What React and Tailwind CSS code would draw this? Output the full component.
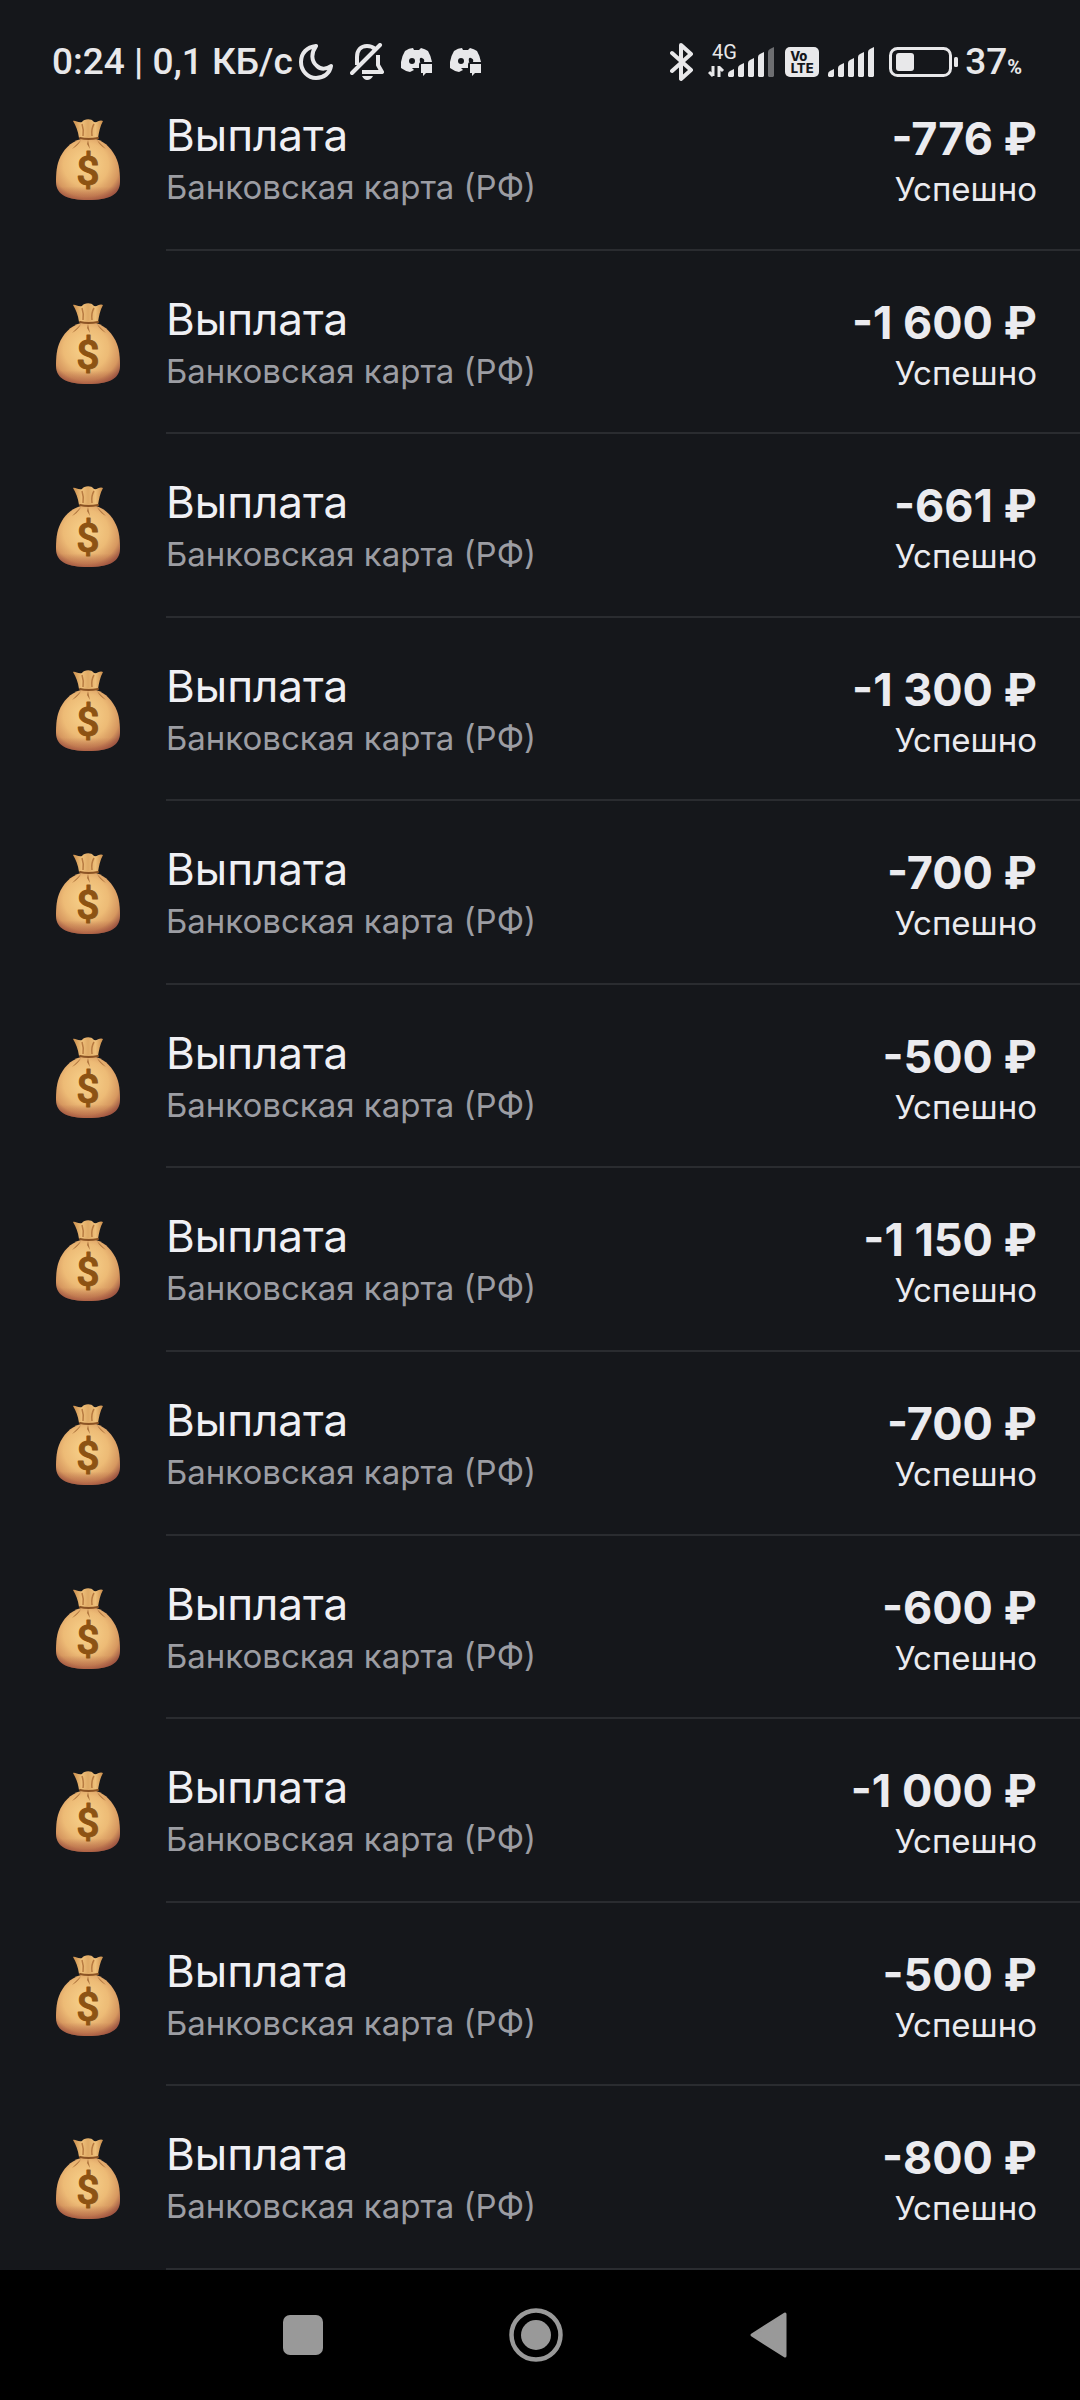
import React, { useId } from "react";

const payouts = [
  { id: 1, amount: "-776 ₽" },
  { id: 2, amount: "-1 600 ₽" },
  { id: 3, amount: "-661 ₽" },
  { id: 4, amount: "-1 300 ₽" },
  { id: 5, amount: "-700 ₽" },
  { id: 6, amount: "-500 ₽" },
  { id: 7, amount: "-1 150 ₽" },
  { id: 8, amount: "-700 ₽" },
  { id: 9, amount: "-600 ₽" },
  { id: 10, amount: "-1 000 ₽" },
  { id: 11, amount: "-500 ₽" },
  { id: 12, amount: "-800 ₽" },
];

const MoneyBag = () => {
  const id = useId();
  const body = `${id}-body`;
  const neck = `${id}-neck`;
  const shade = `${id}-shade`;

  return (
    <svg width="64" height="82" viewBox="0 0 64 82" aria-hidden="true">
      <defs>
        <radialGradient id={body} cx="0.47" cy="0.42" r="0.64">
          <stop offset="0" stopColor="#f8d38c" />
          <stop offset="0.55" stopColor="#edbb76" />
          <stop offset="0.82" stopColor="#d6975f" />
          <stop offset="1" stopColor="#a05a45" />
        </radialGradient>
        <linearGradient id={shade} x1="0" y1="0" x2="0" y2="1">
          <stop offset="0.78" stopColor="#a2503c" stopOpacity="0" />
          <stop offset="1" stopColor="#a2503c" stopOpacity="0.6" />
        </linearGradient>
        <linearGradient id={neck} x1="0" y1="0" x2="1" y2="0">
          <stop offset="0" stopColor="#c98c4b" />
          <stop offset="0.3" stopColor="#efc07a" />
          <stop offset="0.5" stopColor="#dfaa66" />
          <stop offset="0.75" stopColor="#efc07a" />
          <stop offset="1" stopColor="#c98c4b" />
        </linearGradient>
      </defs>
      <path
        d="M25 20C14 23 7 31 3 41C0 49 0 58 0 63C0 76 12 81 32 81C52 81 64 76 64 63C64 58 64 49 61 41C57 31 50 23 40 20Z"
        fill={`url(#${body})`}
      />
      <path
        d="M25 20C14 23 7 31 3 41C0 49 0 58 0 63C0 76 12 81 32 81C52 81 64 76 64 63C64 58 64 49 61 41C57 31 50 23 40 20Z"
        fill={`url(#${shade})`}
      />
      <path
        d="M23 19C22 12 20 7 17 2C19 1 22 4 26 3C28 0 35 -1 38 3C41 4 44 0 47 2C44 7 43 13 42 19Z"
        fill={`url(#${neck})`}
      />
      <path d="M26 5Q28 11 27 17M38 5Q35 10 36 17" stroke="#b87b42" strokeWidth="1.5" fill="none" />
      <path d="M24 19Q32 21 42 19" stroke="#8b5324" strokeWidth="2" fill="none" strokeLinecap="round" />
      <path d="M25 21Q22 27 16 30Q21 25 25 21M32 21L34 30L31 25ZM41 21Q44 27 50 30Q45 25 41 21" fill="#b0763f" />
      <text
        x="32"
        y="66"
        textAnchor="middle"
        fill="#8d5313"
        stroke="#8d5313"
        strokeWidth="1"
        strokeLinejoin="round"
        className="font-['Roboto',sans-serif] text-[41px] font-medium"
      >
        $
      </text>
    </svg>
  );
};

const MoonIcon = () => (
  <svg width="34" height="36" viewBox="0 0 34 36" fill="none" aria-hidden="true">
    <path
      d="M17 2C8 3 2 9 2 18C2 27 9 34 17 34C25 34 31 29 32 22C28 25 22 26 18 22C12 17 12 9 17 2Z"
      stroke="#e8e8ea"
      strokeWidth="4"
      strokeLinejoin="round"
    />
  </svg>
);

const BellOffIcon = () => (
  <svg width="34" height="38" viewBox="0 0 34 38" fill="none" aria-hidden="true">
    <path
      d="M7 22V14C7 7 11 3 17 3C20 3 23 4 25 6M28 12V22L32 29H12"
      stroke="#e8e8ea"
      strokeWidth="4"
      strokeLinejoin="round"
    />
    <path d="M2 30L30 2" stroke="#e8e8ea" strokeWidth="4" strokeLinecap="round" />
    <path d="M12 33H23Q21 37 17 37Q14 37 12 33Z" fill="#e8e8ea" />
  </svg>
);

const DiscordIcon = () => (
  <svg width="32" height="28" viewBox="0 0 32 28" aria-hidden="true">
    <path
      d="M4 3Q8 0 12 0L13 2H18L20 0Q24 1 27 3Q30 8 31 14H20Q18 14 18 17V20H11L13 22L9 24Q4 23 0 20Q-1 11 4 3Z"
      fill="#e8e8ea"
    />
    <circle cx="11" cy="13" r="3" fill="#15171b" />
    <path d="M19 14Q18 9 21 10Q24 11 23 14Z" fill="#15171b" />
    <path d="M20 16H31V25H25L22 28V25H20Z" fill="#e8e8ea" />
  </svg>
);

const BluetoothIcon = () => (
  <svg width="24" height="40" viewBox="0 0 24 40" fill="none" aria-hidden="true">
    <path
      d="M2 11L21 28L11 37V3L21 12L2 29"
      stroke="#e8e8ea"
      strokeWidth="4"
      strokeLinejoin="round"
      strokeLinecap="round"
    />
  </svg>
);

const bars = [
  "M0 27Q0 25 2 24L6 22V29L5 30H1L0 29Z",
  "M10 21Q10 19 12 18L16 16V29L15 30H11L10 29Z",
  "M20 16Q20 14 22 13L26 11V29L25 30H21L20 29Z",
  "M30 10Q30 8 32 7L36 5V29L35 30H31L30 29Z",
  "M40 5Q40 3 42 2L46 0V29L45 30H41L40 29Z",
];

const SignalBars = ({ level }) => (
  <>
    {bars.map((d, i) => (
      <path key={d} d={d} fill={i < level ? "#e8e8ea" : "#6d6e71"} />
    ))}
  </>
);

const MobileSignal = () => (
  <svg width="68" height="44" viewBox="0 0 68 44" aria-hidden="true">
    <text x="4" y="19" fill="#e8e8ea" className="font-['Roboto',sans-serif] text-[20px]">
      4G
    </text>
    <path d="M5 26V36M5 36L1 32M11 37V26M11 27L15 31" stroke="#e8e8ea" strokeWidth="3" fill="none" />
    <g transform="translate(20 7)">
      <SignalBars level={4} />
    </g>
  </svg>
);

const Battery = () => (
  <svg width="70" height="30" viewBox="0 0 70 30" fill="none" aria-hidden="true">
    <rect x="1.5" y="1.5" width="60" height="27" rx="7" stroke="#e8e8ea" strokeWidth="3" />
    <rect x="7" y="6" width="18" height="18" rx="3" fill="#e8e8ea" />
    <rect x="65" y="10" width="4" height="10" rx="1.5" fill="#e8e8ea" />
  </svg>
);

const StatusBar = () => {
  return (
    <header className="relative z-10 flex h-[84px] items-center justify-between pt-[40px] pl-[52px] pr-[58px] font-['Roboto',sans-serif] text-[#e8e8ea]">
      <div className="flex items-center">
        <span className="text-[37px] leading-[44px] font-medium whitespace-nowrap">0:24 | 0,1 КБ/с</span>
        <div className="ml-[6px] flex items-center gap-[17px]">
          <MoonIcon />
          <BellOffIcon />
          <DiscordIcon />
          <DiscordIcon />
        </div>
      </div>
      <div className="flex items-center">
        <BluetoothIcon />
        <div className="ml-[14px] flex items-center gap-[9px]">
          <MobileSignal />
          <div className="flex h-[30px] w-[34px] flex-col items-center justify-center rounded-[5px] bg-[#e8e8ea] font-['Inter',sans-serif] text-[13px] leading-[12px] font-extrabold text-[#15171b]">
            <span className="self-start pl-[5px]">Vo</span>
            <span>LTE</span>
          </div>
          <svg width="48" height="30" viewBox="0 0 48 30" aria-hidden="true">
            <SignalBars level={5} />
          </svg>
        </div>
        <div className="ml-[13px] flex items-center gap-[6px]">
          <Battery />
          <p className="text-[37px] leading-[44px] font-medium whitespace-nowrap">
            37<span className="text-[20px] leading-none font-bold">%</span>
          </p>
        </div>
      </div>
    </header>
  );
};

const PayoutRow = ({ amount }) => {
  return (
    <li className="flex flex-1 pl-[56px]">
      <div className="pt-[52px]">
        <MoneyBag />
      </div>
      <div className="ml-[46px] flex flex-1 justify-between border-b-2 border-[#2a2c30] pr-[43px]">
        <div className="pt-[42px]">
          <p className="text-[44px] leading-[52px] text-[#f0f0f4]">Выплата</p>
          <p className="text-[33px] leading-[52px] text-[#9c9da3]">Банковская карта (РФ)</p>
        </div>
        <div className="pt-[46px] text-right text-[#ebebef]">
          <p className="text-[45px] leading-[52px] font-bold">{amount}</p>
          <p className="text-[33px] leading-[48px]">Успешно</p>
        </div>
      </div>
    </li>
  );
};

const NavigationBar = () => {
  return (
    <nav className="grid h-[130px] grid-cols-3 bg-black pl-[186px] pr-[195px]">
      <button type="button" aria-label="Недавние" className="flex items-center justify-center">
        <span className="size-10 rounded-[7px] bg-[#999999]" />
      </button>
      <button type="button" aria-label="Домой" className="flex items-center justify-center">
        <svg width="54" height="54" viewBox="0 0 54 54">
          <circle cx="27" cy="27" r="24.5" fill="none" stroke="#999999" strokeWidth="4.5" />
          <circle cx="27" cy="27" r="15" fill="#999999" />
        </svg>
      </button>
      <button type="button" aria-label="Назад" className="flex items-center justify-center">
        <svg width="38" height="46" viewBox="0 0 38 46">
          <path d="M2 23L35 2V44Z" fill="#999999" stroke="#999999" strokeWidth="3" strokeLinejoin="round" />
        </svg>
      </button>
    </nav>
  );
};

const App = () => {
  return (
    <div className="flex min-h-screen flex-col bg-[#15171b] font-['Inter',sans-serif]">
      <StatusBar />
      {/* the list is scrolled, so its first row slides up under the status bar */}
      <ul className="-mt-[17px] flex flex-1 flex-col">
        {payouts.map((item) => (
          <PayoutRow key={item.id} amount={item.amount} />
        ))}
      </ul>
      <NavigationBar />
    </div>
  );
};

export default App;
